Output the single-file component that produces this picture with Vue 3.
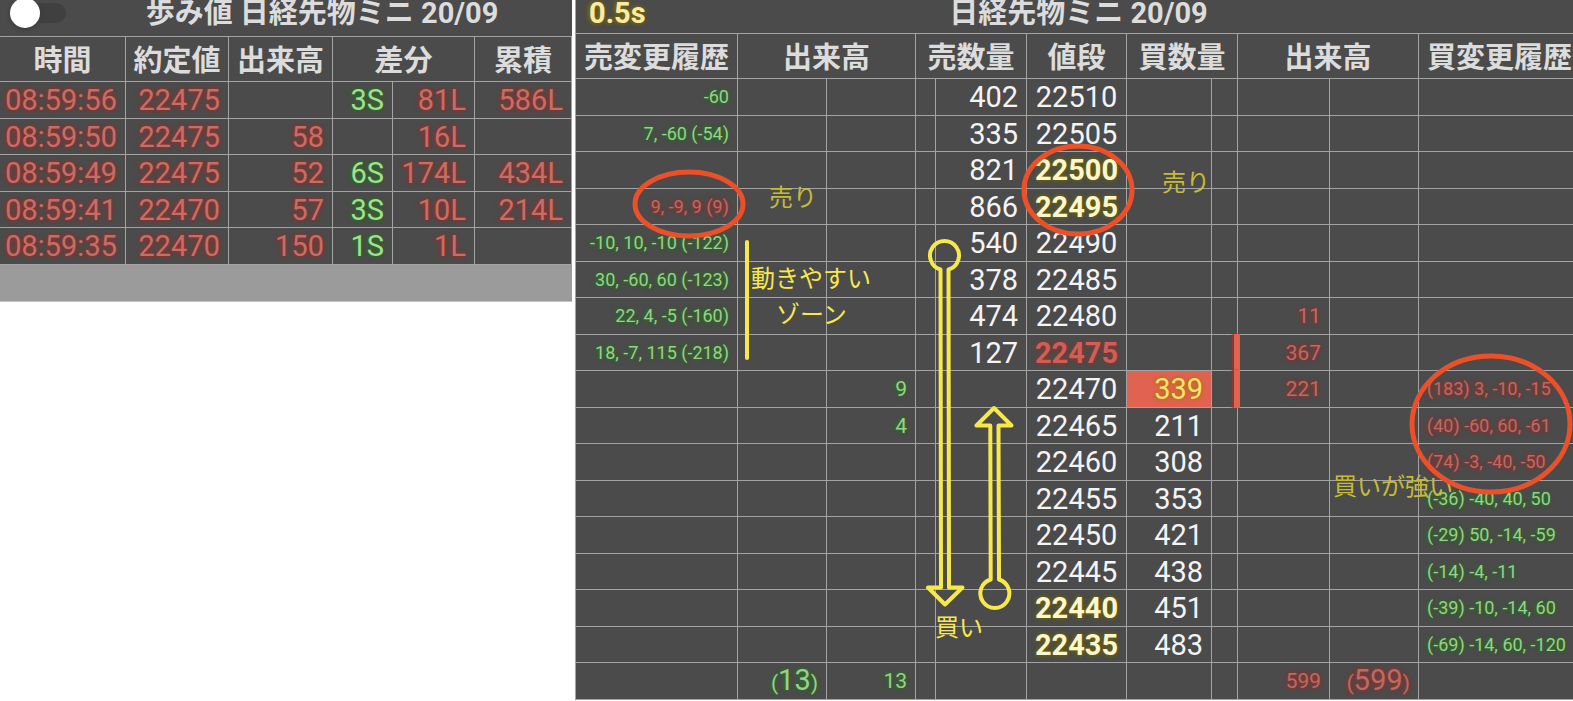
<script setup>
import { ref } from 'vue'

const live = ref(false)

const ticks = [
  { time: '08:59:56', price: '22475', vol: '', sell: '3S', buy: '81L', total: '586L' },
  { time: '08:59:50', price: '22475', vol: '58', sell: '', buy: '16L', total: '' },
  { time: '08:59:49', price: '22475', vol: '52', sell: '6S', buy: '174L', total: '434L' },
  { time: '08:59:41', price: '22470', vol: '57', sell: '3S', buy: '10L', total: '214L' },
  { time: '08:59:35', price: '22470', vol: '150', sell: '1S', buy: '1L', total: '' },
]

const levels = [
  { price: '22510', ask: '402', askLog: '-60' },
  { price: '22505', ask: '335', askLog: '7, -60 (-54)' },
  { price: '22500', ask: '821', tone: 'key' },
  { price: '22495', ask: '866', tone: 'key', askLog: '9, -9, 9 (9)', askTone: 'red' },
  { price: '22490', ask: '540', askLog: '-10, 10, -10 (-122)' },
  { price: '22485', ask: '378', askLog: '30, -60, 60 (-123)' },
  { price: '22480', ask: '474', askLog: '22, 4, -5 (-160)', buyVol: '11' },
  { price: '22475', ask: '127', tone: 'last', askLog: '18, -7, 115 (-218)', buyVol: '367', range: true },
  { price: '22470', bid: '339', hot: true, sellVol: '9', buyVol: '221', range: true, bidLog: '(183) 3, -10, -15', bidTone: 'red' },
  { price: '22465', bid: '211', sellVol: '4', bidLog: '(40) -60, 60, -61', bidTone: 'red' },
  { price: '22460', bid: '308', bidLog: '(74) -3, -40, -50', bidTone: 'red' },
  { price: '22455', bid: '353', bidLog: '(-36) -40, 40, 50' },
  { price: '22450', bid: '421', bidLog: '(-29) 50, -14, -59' },
  { price: '22445', bid: '438', bidLog: '(-14) -4, -11' },
  { price: '22440', bid: '451', tone: 'key', bidLog: '(-39) -10, -14, 60' },
  { price: '22435', bid: '483', tone: 'key', bidLog: '(-69) -14, 60, -120' },
]
</script>

<template>
  <main class="page">
    <section class="panel tape">
      <header class="bar tape-bar">
        <input v-model="live" class="switch" type="checkbox" role="switch" aria-label="歩み値" />
        <h2>歩み値 日経先物ミニ 20/09</h2>
      </header>
      <table>
        <colgroup>
          <col class="w126" /><col class="w103" /><col class="w104" /><col class="w60" /><col class="w82" /><col class="w97" />
        </colgroup>
        <thead>
          <tr>
            <th>時間</th>
            <th>約定値</th>
            <th>出来高</th>
            <th colspan="2">差分</th>
            <th>累積</th>
          </tr>
        </thead>
        <tbody>
          <tr v-for="t in ticks" :key="t.time">
            <td class="red">{{ t.time }}</td>
            <td class="red">{{ t.price }}</td>
            <td class="red">{{ t.vol }}</td>
            <td class="green">{{ t.sell }}</td>
            <td class="red">{{ t.buy }}</td>
            <td class="red">{{ t.total }}</td>
          </tr>
        </tbody>
      </table>
    </section>

    <section class="panel board">
      <header class="bar board-bar">
        <span class="interval">0.5s</span>
        <h2>日経先物ミニ 20/09</h2>
      </header>
      <table>
        <colgroup>
          <col class="w162" /><col class="w89" /><col class="w89" /><col class="w20" /><col class="w91" /><col class="w100" />
          <col class="w85" /><col class="w26" /><col class="w92" /><col class="w89" /><col class="w162" />
        </colgroup>
        <thead>
          <tr>
            <th>売変更履歴</th>
            <th colspan="2">出来高</th>
            <th colspan="2">売数量</th>
            <th>値段</th>
            <th colspan="2">買数量</th>
            <th colspan="2">出来高</th>
            <th>買変更履歴</th>
          </tr>
        </thead>
        <tbody>
          <tr v-for="l in levels" :key="l.price">
            <td class="log" :class="l.askTone || 'green'">{{ l.askLog }}</td>
            <td></td>
            <td class="vol green">{{ l.sellVol }}</td>
            <td></td>
            <td>{{ l.ask }}</td>
            <td class="price" :class="l.tone">{{ l.price }}</td>
            <td :class="{ hot: l.hot }">{{ l.bid }}</td>
            <td :class="{ range: l.range }"></td>
            <td class="vol red">{{ l.buyVol }}</td>
            <td></td>
            <td class="log start" :class="l.bidTone || 'green'">{{ l.bidLog }}</td>
          </tr>
          <tr>
            <td></td>
            <td class="vol green">(<b>13</b>)</td>
            <td class="vol green">13</td>
            <td></td>
            <td></td>
            <td></td>
            <td></td>
            <td></td>
            <td class="vol red">599</td>
            <td class="vol red">(<b>599</b>)</td>
            <td></td>
          </tr>
        </tbody>
      </table>
    </section>

    <svg class="notes" viewBox="0 0 1573 701">
      <g class="dim">
        <text x="769" y="206">売り</text>
        <text x="1162" y="191">売り</text>
        <text x="1333" y="495">買いが強い</text>
      </g>
      <g class="bright">
        <text x="751" y="287">動きやすい</text>
        <text x="776" y="323">ゾーン</text>
        <text x="935" y="636">買い</text>
      </g>
      <g class="rings">
        <ellipse cx="689" cy="204" rx="54" ry="32" />
        <ellipse cx="1078" cy="190" rx="54" ry="44" />
        <ellipse cx="1491" cy="424" rx="79" ry="68" />
      </g>
      <g class="arrows">
        <path d="M747 242V358" />
        <path d="M940.5 269.5A14.5 14.5 0 1 1 948.5 269.5L949 587.5H962.5L945 604.5L928 587.5H941Z" />
        <path d="M990.7 579.5A14.5 14.5 0 1 0 999 579.5L998.5 425.5H1011.5L994 408L976.5 425.5H990.3Z" />
      </g>
    </svg>
  </main>
</template>

<style>
body {
  margin: 0;
  background: #fff;
}
</style>

<style scoped>
.page {
  position: relative;
  display: grid;
  grid-template-columns: 572fr 998fr;
  column-gap: 3px;
  align-items: start;
  overflow: hidden;
  font-family: Roboto, "Noto Sans CJK JP", sans-serif;
  font-size: 29px;
  line-height: 32px;
  color: #f4f4f4;
}
.panel {
  min-width: 0;
  background: #4b4b4b;
}
.tape {
  background: #9b9b9b;
  padding-bottom: 36px;
  border-bottom: 1px solid #c4c4c4;
}
.board {
  border-left: 1px solid #a4a4a4;
}
.bar {
  box-sizing: border-box;
  display: flex;
  align-items: center;
  background: #4b4b4b;
  padding-bottom: 8px;
}
.tape-bar {
  height: 36px;
  padding-bottom: 10px;
}
.board-bar {
  position: relative;
  height: 33px;
  width: calc(100% + 8px);
}
h2 {
  flex: 1;
  margin: 0;
  font-size: 29px;
  line-height: 24px;
  font-weight: 700;
  text-align: center;
  white-space: nowrap;
  color: #dcdcdc;
}
.interval {
  position: absolute;
  left: 13px;
  line-height: 24px;
  font-weight: 700;
  color: #f8eba8;
  text-shadow: 0 0 4px #7d6a00, -2px 0 4px #7d6a00;
}
.switch {
  appearance: none;
  flex: none;
  position: relative;
  width: 44px;
  height: 20px;
  margin: 0 6px 0 22px;
  border-radius: 10px;
  background: #404040;
}
.switch::before {
  content: "";
  position: absolute;
  left: -12px;
  top: -5px;
  width: 30px;
  height: 30px;
  border-radius: 50%;
  background: #fff;
  box-shadow: 0 2px 4px #3a3a3a;
}
.switch:checked::before {
  left: 20px;
}
table {
  width: 100%;
  table-layout: fixed;
  border-collapse: separate;
  border-spacing: 0;
  border-top: 1px solid #a3a3a3;
  background: #4b4b4b;
}
.board table {
  width: calc(100% + 8px);
}
th,
td {
  box-sizing: border-box;
  padding: 0;
  border-right: 1px solid #a3a3a3;
  border-bottom: 1px solid #a3a3a3;
  white-space: nowrap;
}
th {
  height: 45px;
  padding-top: 3px;
  font-weight: 700;
  color: #dcdcdc;
}
td {
  height: 37px;
  padding-right: 8px;
  text-align: right;
}
tr:nth-child(even) td {
  height: 36px;
}
.red {
  color: #c0706a;
  text-shadow: 0 0 3px #a52a20, -1px 0 4px #a52a20;
}
.green {
  color: #a6dd98;
  text-shadow: 0 0 3px #1f7a10, -1px 0 4px #1f7a10;
}
.log {
  font-size: 18px;
}
.vol {
  font-size: 21px;
}
.log.green,
.vol.green {
  color: #9fcb96;
}
.log.red,
.vol.red {
  color: #b26e69;
}
.vol b {
  font-size: 29px;
  font-weight: 400;
}
.start {
  padding: 0 0 0 8px;
  text-align: left;
}
.price {
  padding: 0;
  text-align: center;
}
.key {
  font-weight: 700;
  color: #fbf6cf;
  text-shadow: 0 0 4px #6b6400, 0 0 4px #6b6400;
}
.last {
  font-weight: 700;
  color: #cf5f56;
  text-shadow: 0 0 4px #a52a20;
}
.hot {
  background: #df6350;
  color: #ffdf7a;
  text-shadow: 0 0 4px #a87400, -1px 0 3px #b47a00;
}
.range {
  position: relative;
}
.range::after {
  content: "";
  position: absolute;
  top: -1px;
  bottom: -1px;
  right: -3px;
  width: 6px;
  background: #df6350;
  box-shadow: -2px 0 2px #9a342a;
}
.notes {
  position: absolute;
  top: 0;
  left: 0;
  width: 100%;
  pointer-events: none;
  font-size: 24px;
}
.dim {
  fill: #c6bb37;
}
.bright {
  fill: #f8e94b;
}
.rings,
.arrows {
  fill: none;
  stroke-width: 4;
  stroke-linejoin: round;
  stroke-linecap: round;
}
.rings {
  stroke: #ec5029;
  stroke-width: 5;
}
.arrows {
  stroke: #f8e94b;
}
.w20 { width: 20px; }
.w26 { width: 26px; }
.w60 { width: 60px; }
.w82 { width: 82px; }
.w85 { width: 85px; }
.w89 { width: 89px; }
.w91 { width: 91px; }
.w92 { width: 92px; }
.w97 { width: 97px; }
.w100 { width: 100px; }
.w103 { width: 103px; }
.w104 { width: 104px; }
.w126 { width: 126px; }
.w162 { width: 162px; }
</style>
